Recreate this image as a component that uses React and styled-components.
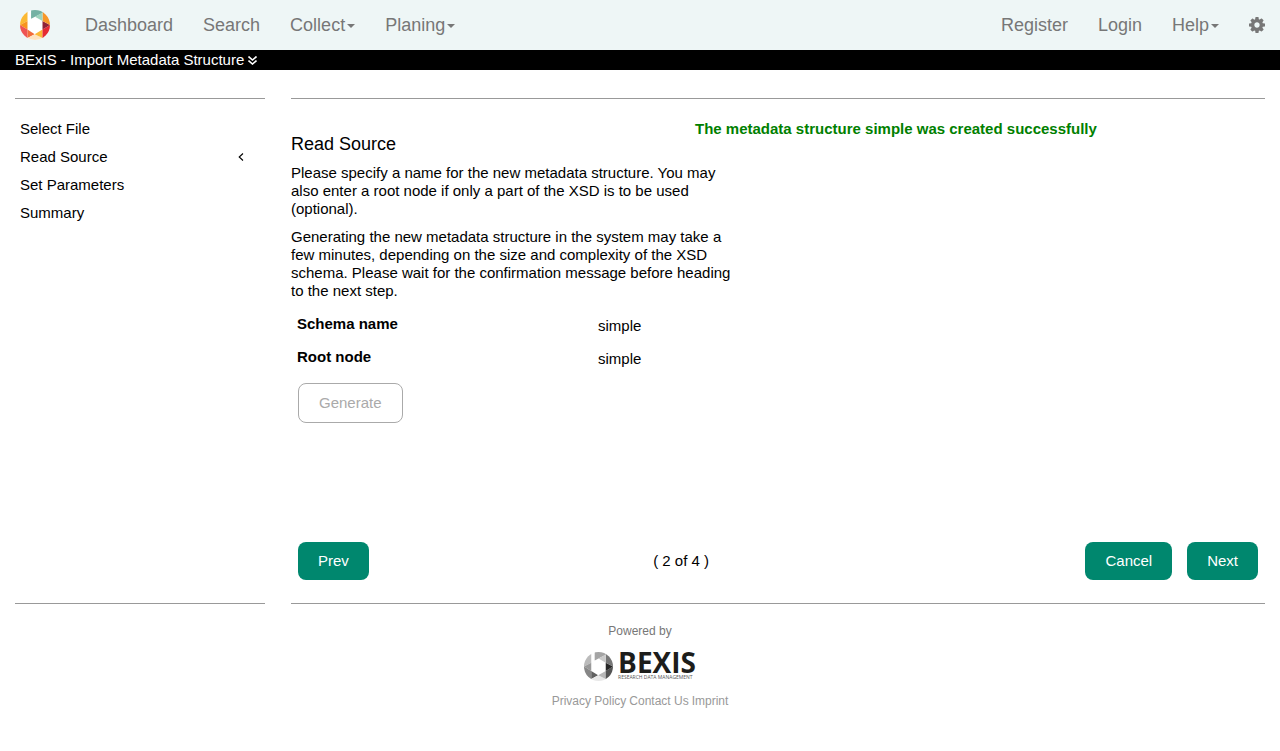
import React from "react";
import styled, { createGlobalStyle } from "styled-components";

const GlobalStyle = createGlobalStyle`
  *, *::before, *::after { box-sizing: border-box; }
  body {
    margin: 0;
    background: #fff;
    color: #000;
    font: 15px/18px "Liberation Sans", Arial, sans-serif;
  }
  a { color: inherit; text-decoration: none; }
`;

const Navbar = styled.nav`
  display: flex;
  align-items: center;
  height: 50px;
  padding-left: 20px;
  background: #eef6f6;
  color: #777;
`;

const Brand = styled.a`
  display: flex;
  margin-right: 20px;
`;

const NavGroup = styled.div`
  display: flex;
  align-items: center;
  margin-left: ${(p) => (p.$end ? "auto" : "0")};
`;

const NavLink = styled.a`
  display: flex;
  align-items: center;
  padding: 0 15px;
  font-size: 18px;
  line-height: 50px;
`;

const Caret = styled.span`
  margin: 2px 0 0 2px;
  border: 4px solid transparent;
  border-top-color: currentColor;
  border-bottom: 0;
`;

const TitleBar = styled.header`
  display: flex;
  align-items: center;
  gap: 4px;
  height: 20px;
  padding: 0 15px;
  background: #000;
  color: #fff;
`;

const Columns = styled.div`
  display: flex;
  gap: 26px;
  padding: 28px 15px 0;
`;

const Panel = styled.div`
  border: solid #999;
  border-width: 1px 0;
`;

const Sidebar = styled(Panel)`
  flex: 0 0 250px;
  padding: 16px 21px 0 5px;
`;

const Step = styled.a`
  display: flex;
  align-items: center;
  justify-content: space-between;
  line-height: 28px;
`;

const Main = styled(Panel)`
  flex: 1;
  padding: 23px 0;
`;

const StepBody = styled.section`
  min-height: 420px;
`;

const Message = styled.p`
  margin: 0 0 0 404px;
  color: #008000;
  font-weight: bold;
  line-height: 14px;
`;

const Heading = styled.h1`
  margin: 0 0 12px;
  font-size: 18px;
  font-weight: normal;
  line-height: 16px;
`;

const Paragraph = styled.p`
  max-width: 444px;
  margin: 0 0 10px;
`;

const Fields = styled.dl`
  display: grid;
  grid-template-columns: 301px 1fr;
  grid-auto-rows: 33px;
  margin: 15px 0 2px;
  padding-left: 6px;
`;

const FieldName = styled.dt`
  font-weight: bold;
`;

const FieldValue = styled.dd`
  margin: 0;
  padding-top: 2px;
`;

const Button = styled.button`
  height: 38px;
  padding: 0 20px;
  border: 0;
  border-radius: 8px;
  background: #00876e;
  color: #fff;
  font: inherit;
`;

const OutlineButton = styled(Button)`
  height: 40px;
  margin-left: 7px;
  border: 1px solid #aaa;
  background: #fff;
  color: #aaa;
`;

const Pager = styled.div`
  display: grid;
  grid-template-columns: 37% auto 1fr;
  align-items: center;
  padding: 0 7px;
`;

const PagerStart = styled.div`
  display: flex;
`;

const PagerEnd = styled.div`
  display: flex;
  justify-content: flex-end;
  gap: 15px;
`;

const Footer = styled.footer`
  display: flex;
  flex-direction: column;
  align-items: center;
  padding: 20px 0;
  color: #777;
  font-size: 12px;
  line-height: 14px;
`;

const FooterLogo = styled.div`
  display: flex;
  align-items: center;
  gap: 5px;
  margin: 13px 0;
`;

const LogoWords = styled.div`
  display: flex;
  flex-direction: column;
  color: #1d1d1b;
  font-family: "Open Sans", sans-serif;
`;

const LogoName = styled.span`
  font-size: 28px;
  font-weight: bold;
  line-height: 22px;
`;

const LogoTagline = styled.span`
  color: #555;
  font-size: 5px;
  line-height: 8px;
  white-space: nowrap;
`;

const FooterLinks = styled.div`
  display: flex;
  gap: 3px;
  color: #999;
`;

const colour = {
  yellow: "#fbb934", orange: "#f7941e", pink: "#ee5454", coral: "#f26c3a",
  gold: "#fbb934", cream: "#fee3c0", red: "#e52b33", maroon: "#8f2338",
  amber: "#f79728", teal: "#74b1a3", mint: "#9dd3bd",
};
const grey = {
  yellow: "#bbb", orange: "#999", pink: "#868686", coral: "#606060",
  gold: "#b8b8b8", cream: "#e8e8e8", red: "#555", maroon: "#272727",
  amber: "#777", teal: "#a4a4a4", mint: "#cacaca",
};

function Ring({ size, palette: c, id }) {
  return (
    <svg width={size} height={size} viewBox="0 0 92 92" aria-hidden="true">
      <clipPath id={id}><circle cx="46" cy="46" r="46" /></clipPath>
      <g clipPath={`url(#${id})`}>
        <rect width="92" height="92" fill="#fff" />
        <path d="M0 0H23V34L0 46Z" fill={c.yellow} />
        <path d="M23 34V60L0 46Z" fill={c.orange} />
        <path d="M0 46L23 60V92H0Z" fill={c.pink} />
        <path d="M23 60L45 74L23 86Z" fill={c.coral} />
        <path d="M23 86L45 74L69 86V92H23Z" fill={c.cream} />
        <path d="M69 60V86L45 74Z" fill={c.gold} />
        <path d="M92 46V92H69V60Z" fill={c.red} />
        <path d="M69 34L92 46L69 60Z" fill={c.maroon} />
        <path d="M69 0H92V46L69 34Z" fill={c.amber} />
        <path d="M34 0H69V9L34 27Z" fill={c.teal} />
        <path d="M69 8V34L46 21Z" fill={c.mint} />
      </g>
    </svg>
  );
}

function Cog() {
  return (
    <svg width="16" height="16" viewBox="0 -1408 1536 1536" fill="currentColor" aria-hidden="true">
      <path
        transform="scale(1 -1)"
        d="M1024 640q0 106 -75 181t-181 75t-181 -75t-75 -181t75 -181t181 -75t181 75t75 181zM1536 749v-222q0 -12 -8 -23t-20 -13l-185 -28q-19 -54 -39 -91q35 -50 107 -138q10 -12 10 -25t-9 -23q-27 -37 -99 -108t-94 -71q-12 0 -26 9l-138 108q-44 -23 -91 -38q-16 -136 -29 -186q-7 -28 -36 -28h-222q-14 0 -24.5 8.5t-11.5 21.5l-28 184q-49 16 -90 37l-141 -107q-10 -9 -25 -9q-14 0 -25 11q-126 114 -165 168q-7 10 -7 23q0 12 8 23q15 21 51 66.5t54 70.5q-27 50 -41 99l-183 27q-13 2 -21 12.5t-8 23.5v222q0 12 8 23t19 13l186 28q14 46 39 92q-40 57 -107 138q-10 12 -10 24q0 10 9 23q26 36 98.5 107.5t94.5 71.5q13 0 26 -10l138 -107q44 23 91 38q16 136 29 186q7 28 36 28h222q14 0 24.5 -8.5t11.5 -21.5l28 -184q49 -16 90 -37l142 107q9 9 24 9q13 0 25 -10q129 -119 165 -170q7 -8 7 -22q0 -12 -8 -23q-15 -21 -51 -66.5t-54 -70.5q26 -50 41 -98l183 -28q13 -2 21 -12.5t8 -23.5z"
      />
    </svg>
  );
}

const DoubleDown = () => (
  <svg width="9" height="9" viewBox="0 0 9 9" fill="none" stroke="currentColor" strokeWidth="1.6" aria-hidden="true">
    <path d="M.5 .5L4.5 4L8.5 .5M.5 4.5L4.5 8L8.5 4.5" />
  </svg>
);

const AngleLeft = () => (
  <svg width="6" height="8" viewBox="0 0 6 8" fill="none" stroke="currentColor" strokeWidth="1.1" aria-hidden="true">
    <path d="M5 .5L1.2 4L5 7.5" />
  </svg>
);

const steps = ["Select File", "Read Source", "Set Parameters", "Summary"];
const fields = [["Schema name", "simple"], ["Root node", "simple"]];

export default function App() {
  return (
    <>
      <GlobalStyle />
      <Navbar>
        <Brand href="#" aria-label="Home"><Ring size={30} palette={colour} id="ring-colour" /></Brand>
        <NavGroup>
          <NavLink href="#">Dashboard</NavLink>
          <NavLink href="#">Search</NavLink>
          <NavLink href="#">Collect<Caret /></NavLink>
          <NavLink href="#">Planing<Caret /></NavLink>
        </NavGroup>
        <NavGroup $end>
          <NavLink href="#">Register</NavLink>
          <NavLink href="#">Login</NavLink>
          <NavLink href="#">Help<Caret /></NavLink>
          <NavLink href="#" aria-label="Settings"><Cog /></NavLink>
        </NavGroup>
      </Navbar>
      <TitleBar>BExIS - Import Metadata Structure <DoubleDown /></TitleBar>
      <Columns>
        <Sidebar as="aside">
          {steps.map((step, i) => (
            <Step href="#" key={step}>{step}{i === 1 && <AngleLeft />}</Step>
          ))}
        </Sidebar>
        <Main as="main">
          <StepBody>
            <Message>The metadata structure simple was created successfully</Message>
            <Heading>Read Source</Heading>
            <Paragraph>
              Please specify a name for the new metadata structure. You may also enter a
              root node if only a part of the XSD is to be used (optional).
            </Paragraph>
            <Paragraph>
              Generating the new metadata structure in the system may take a few minutes,
              depending on the size and complexity of the XSD schema. Please wait for the
              confirmation message before heading to the next step.
            </Paragraph>
            <Fields>
              {fields.map(([name, value]) => (
                <React.Fragment key={name}>
                  <FieldName>{name}</FieldName>
                  <FieldValue>{value}</FieldValue>
                </React.Fragment>
              ))}
            </Fields>
            <OutlineButton type="button" disabled>Generate</OutlineButton>
          </StepBody>
          <Pager>
            <PagerStart><Button type="button">Prev</Button></PagerStart>
            <span>( 2 of 4 )</span>
            <PagerEnd>
              <Button type="button">Cancel</Button>
              <Button type="button">Next</Button>
            </PagerEnd>
          </Pager>
        </Main>
      </Columns>
      <Footer>
        <span>Powered by</span>
        <FooterLogo>
          <Ring size={29} palette={grey} id="ring-grey" />
          <LogoWords>
            <LogoName>BEXIS</LogoName>
            <LogoTagline>RESEARCH DATA MANAGEMENT</LogoTagline>
          </LogoWords>
        </FooterLogo>
        <FooterLinks>
          <a href="#">Privacy Policy</a>
          <a href="#">Contact Us</a>
          <a href="#">Imprint</a>
        </FooterLinks>
      </Footer>
    </>
  );
}
